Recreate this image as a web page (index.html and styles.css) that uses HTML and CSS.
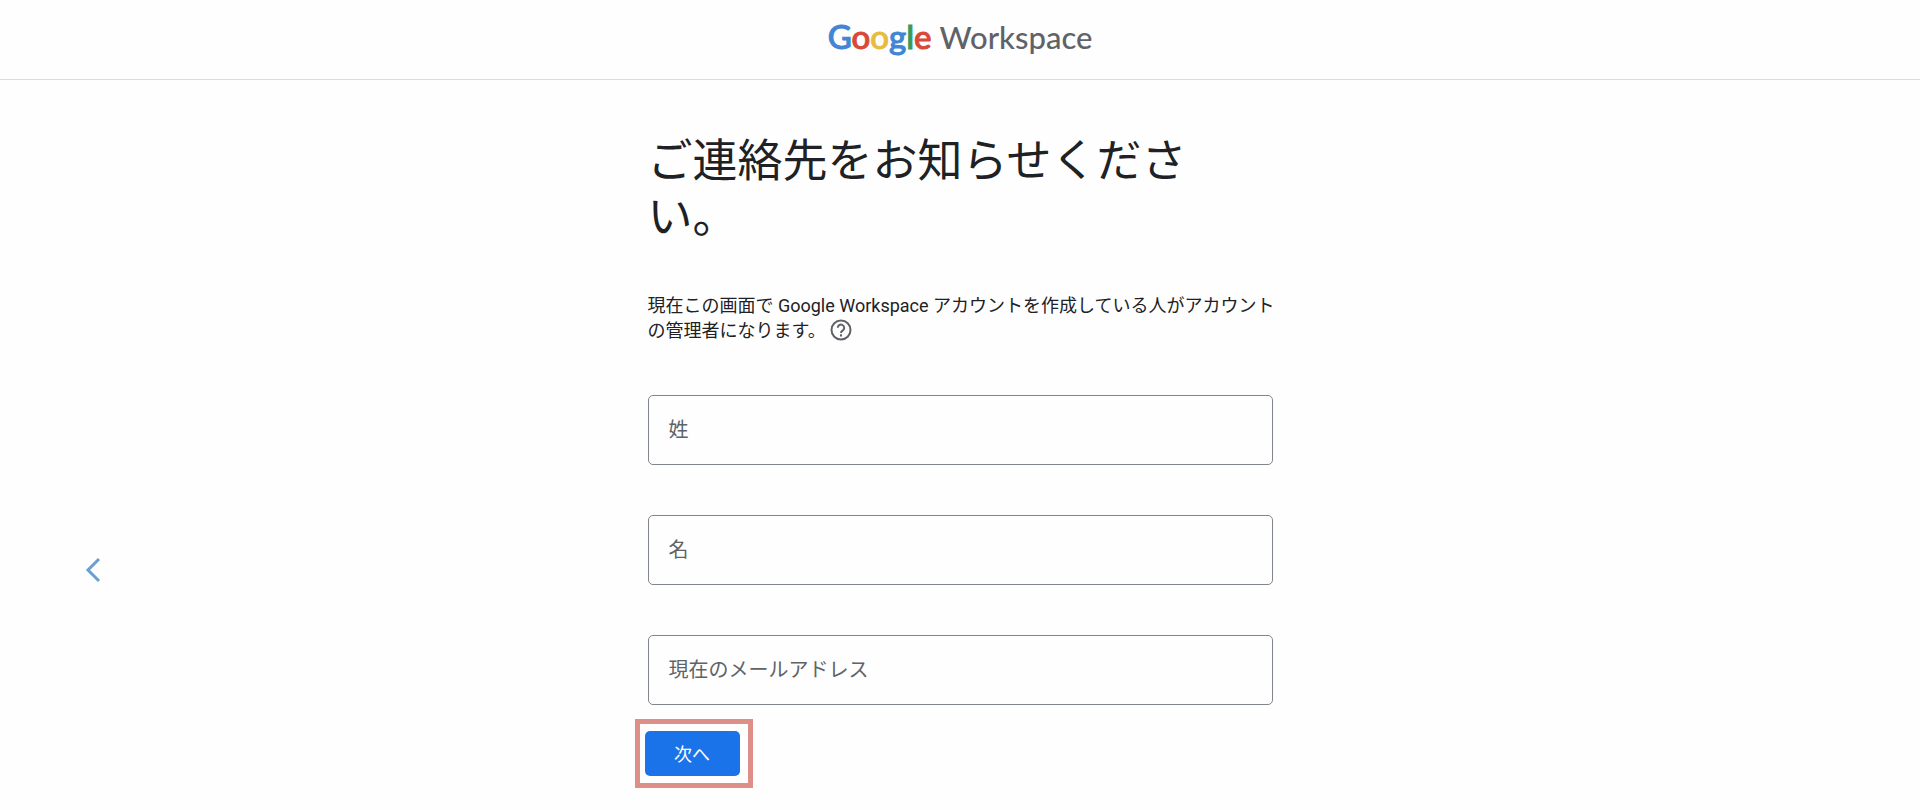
FILE: index.html
```html
<!DOCTYPE html>
<html lang="ja">
<head>
  <meta charset="UTF-8">
  <meta name="viewport" content="width=device-width, initial-scale=1.0">
  <title>Google Workspace</title>
  <link rel="stylesheet" href="styles.css">
</head>
<body>
  <header>
    <div class="logo">
      <span class="google"><span class="blue">G</span><span class="red">o</span><span class="yellow">o</span><span class="blue">g</span><span class="green">l</span><span class="red">e</span></span>
      <span class="product">Workspace</span>
    </div>
  </header>
  <main>
    <a class="back" href="#" aria-label="戻る">
      <svg width="16" height="26" viewBox="0 0 16 26" fill="none" stroke="currentColor" stroke-width="3">
        <path d="M14 2L3 13l11 11"/>
      </svg>
    </a>
    <form id="contact-form">
      <h1>ご連絡先をお知らせください。</h1>
      <p>現在この画面で Google Workspace アカウントを作成している人がアカウントの管理者になります。
        <button type="button" class="help" aria-label="ヘルプ">
          <svg width="22" height="22" viewBox="0 0 22 22" fill="none" stroke="currentColor" stroke-width="2">
            <circle cx="11" cy="11" r="9.5"/>
            <path d="M7.8 8.8a3.2 3.2 0 1 1 5.5 2.2C12.2 12 11 12.400 11 14"/>
            <path d="M11 15.200v2.200"/>
          </svg>
        </button>
      </p>
      <div class="field">
        <input type="text" id="last-name" placeholder=" " required>
        <label for="last-name">姓</label>
      </div>
      <div class="field">
        <input type="text" id="first-name" placeholder=" " required>
        <label for="first-name">名</label>
      </div>
      <div class="field">
        <input type="email" id="email" placeholder=" " required>
        <label for="email">現在のメールアドレス</label>
      </div>
      <div class="highlight">
        <button type="submit" class="next">次へ</button>
      </div>
    </form>
  </main>
</body>
</html>
```
FILE: styles.css
```css
* {
  box-sizing: border-box;
}
body {
  margin: 0;
  font-family: Roboto, "Noto Sans CJK JP", sans-serif;
  background-color: #fefefe;
  color: #202124;
}
header {
  display: flex;
  justify-content: center;
  align-items: center;
  height: 80px;
  padding-bottom: 6px;
  border-bottom: 1px solid #dadce0;
}
.logo {
  display: flex;
  align-items: baseline;
  gap: 8px;
  font-family: Lato, sans-serif;
  font-weight: 500;
  font-size: 31px;
  line-height: 40px;
}
.google {
  font-size: 33px;
  -webkit-text-stroke: 1px;
}
.product {
  color: #5f6368;
}
.blue {
  color: #4285d4;
}
.red {
  color: #d8493a;
}
.yellow {
  color: #e6bd3c;
}
.green {
  color: #3b9a57;
}
main {
  display: grid;
  grid-template-columns: 1fr minmax(0, 625px) 1fr;
  padding-top: 54px;
}
.back {
  justify-self: start;
  margin-top: 423px;
  margin-left: 85px;
  height: 26px;
  color: #699fd3;
}
.back svg {
  display: block;
}
h1 {
  margin: 0;
  font-size: 45px;
  font-weight: normal;
  line-height: 56px;
}
p {
  margin: 47px -8px 50px 0;
  font-size: 18px;
  line-height: 25px;
}
.help {
  margin: 0 0 4px;
  padding: 0;
  border: none;
  background: none;
  color: #5f6368;
  height: 22px;
  vertical-align: middle;
  cursor: pointer;
}
.help svg {
  display: block;
}
.field {
  position: relative;
  margin-bottom: 50px;
}
.field input {
  display: block;
  width: 100%;
  height: 70px;
  padding: 0 20px;
  border: 1px solid #80868b;
  border-radius: 5px;
  background: none;
  font: inherit;
  font-size: 20px;
}
.field label {
  position: absolute;
  left: 21px;
  top: 21px;
  font-size: 20px;
  line-height: 28px;
  color: #5f6368;
  pointer-events: none;
}
.field input:focus + label,
.field input:not(:placeholder-shown) + label {
  top: -14px;
  background-color: #fefefe;
  font-size: 15px;
}
.highlight {
  width: fit-content;
  margin: -36px 0 22px -13px;
  padding: 7px 8px 7px 5px;
  border: 5px solid #de8f88;
}
.next {
  display: block;
  width: 95px;
  height: 45px;
  padding: 0 0 2px;
  border: none;
  border-radius: 5px;
  background-color: #1a73e8;
  color: white;
  font: inherit;
  font-size: 18px;
  cursor: pointer;
}
```
